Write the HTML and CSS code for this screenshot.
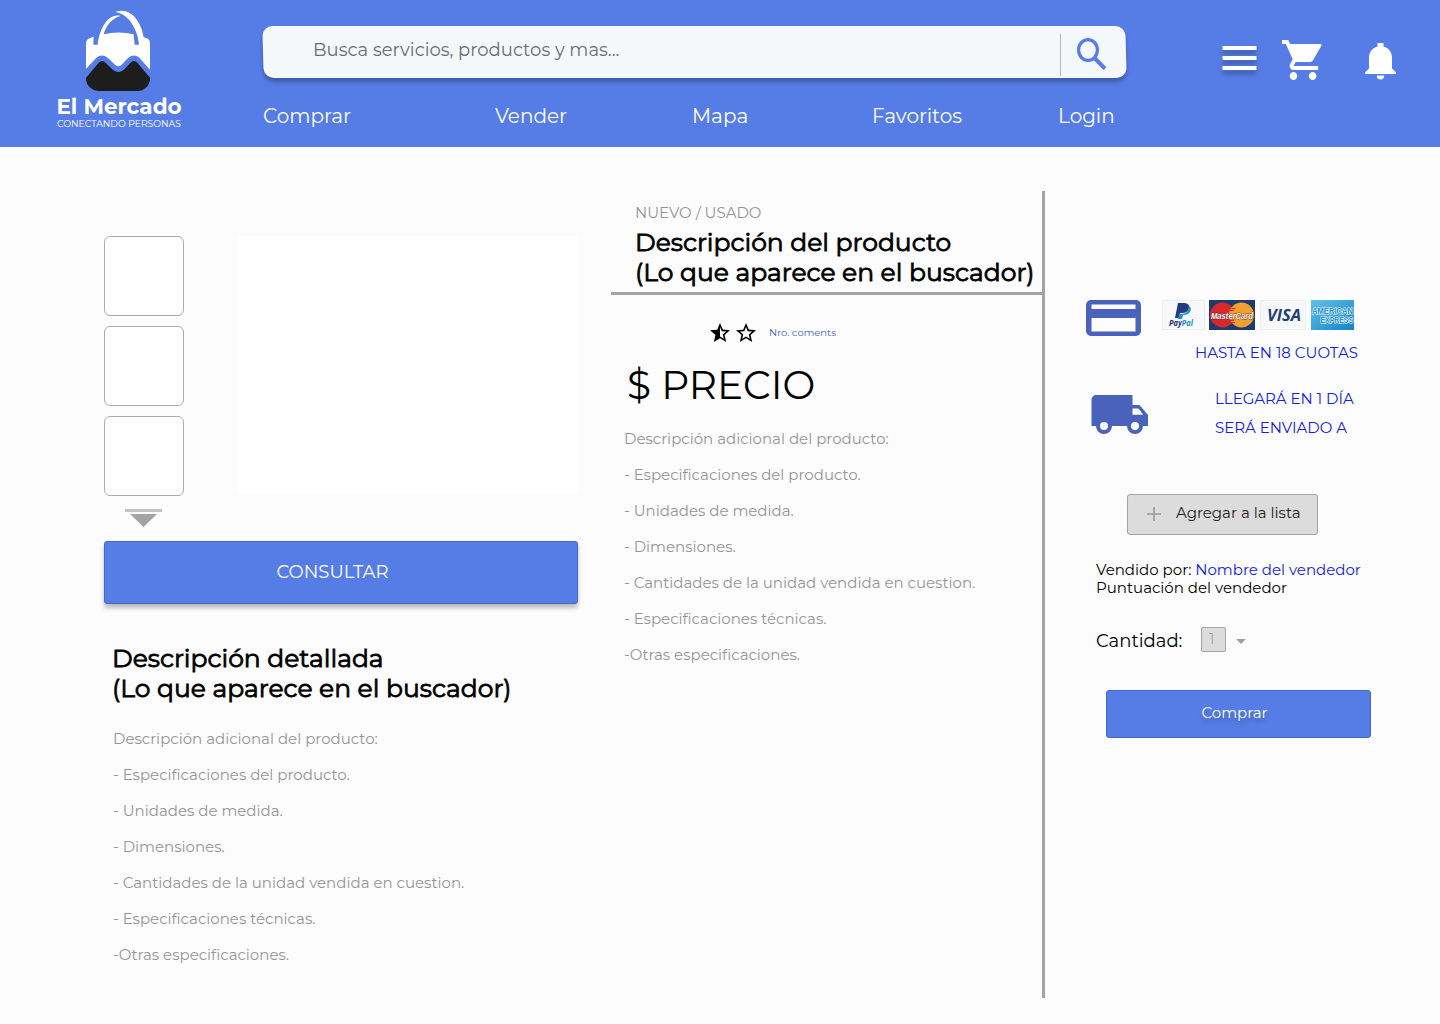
FILE: index.html
```html
<!DOCTYPE html>
<html lang="es">
<head>
<meta charset="utf-8">
<title>El Mercado</title>
<link rel="stylesheet" href="styles.css">
</head>
<body>
<header class="header">
  <a class="brand">
    <svg class="brand-mark" viewBox="135 30 198 246">
      <path fill="#fff" d="M138 207V128Q139 115 161 110L160 134H173C178 90 202 38 242 48C214 55 198 78 191 103Q235 92 281 103L284 134H297C294 92 268 42 226 36C268 20 303 60 311 112Q329 115 330 128V209L298 173Q282 160 265 173L245 194Q235 203 225 194L203 173Q186 160 169 173Z"/>
      <path fill="#1d1d1d" d="M138 233L176 188Q185 179 195 187L219 210Q235 222 251 210L273 187Q283 179 292 188L330 233V240Q326 268 296 273H174Q142 268 138 240Z"/>
    </svg>
    <span class="brand-name">El Mercado</span>
    <span class="brand-tag">CONECTANDO PERSONAS</span>
  </a>
  <div class="center">
    <div class="search">
      <span class="search-text">Busca servicios, productos y mas...</span>
      <span class="search-btn">
        <svg width="30" height="33" viewBox="0 0 30 33" fill="none" stroke="#557de5"><ellipse cx="11" cy="12" rx="9.4" ry="10.4" stroke-width="3.2"/><path stroke-width="4" d="M18 20.5l10 10.2"/></svg>
      </span>
    </div>
    <nav class="nav">
      <a class="n1">Comprar</a><a class="n2">Vender</a><a class="n3">Mapa</a><a class="n4">Favoritos</a><a class="n5">Login</a>
    </nav>
  </div>
  <div class="actions">
    <svg class="menu" width="35" height="25" viewBox="0 0 35 25" fill="#fff"><path d="M.5 0h34v4h-34zM.5 10h34v4h-34zM.5 20h34v4h-34z"/></svg>
    <svg class="cart" width="40" height="40" viewBox="1 2 20.900 20" preserveAspectRatio="none" fill="#fff"><path d="M7 18c-1.100 0-1.990.9-1.990 2S5.900 22 7 22s2-.9 2-2-.9-2-2-2zM1 2v2h2l3.600 7.590-1.350 2.450c-.16.28-.25.61-.25.96 0 1.100.9 2 2 2h12.900v-2H7.420c-.14 0-.25-.11-.25-.25l.03-.12.900-1.630h7.450c.75 0 1.410-.41 1.750-1.030l4.480-7.470A1 1 0 0 0 20.900 4H5.210l-.94-2H1zm16 16c-1.100 0-1.990.9-1.990 2s.89 2 1.990 2 2-.9 2-2-.9-2-2-2z"/></svg>
    <svg class="bell" width="31" height="37" viewBox="0 0 31 37" fill="#fff"><path d="M12.500 0h6v3.500C24.500 5 27 10 27 15v10.500l4 4V31H0v-1.500l4-4V15C4 10 6.500 5 12.500 3.500zM11.800 32.500h7.400a3.700 4 0 0 1-7.400 0z"/></svg>
  </div>
</header>
<main class="main">
  <section class="left">
    <div class="gallery">
      <div class="thumbs">
        <div class="thumb"></div><div class="thumb"></div><div class="thumb"></div>
        <svg class="more" width="37" height="18" viewBox="0 0 37 18"><path fill="#c4c4c4" d="M0 0h37v3H0z"/><path fill="#a4a4a4" d="M5 5h27L18.500 18z"/></svg>
      </div>
      <div class="photo"></div>
    </div>
    <div class="consult">CONSULTAR</div>
    <h2 class="title detail-title">Descripción detallada<br>(Lo que aparece en el buscador)</h2>
    <ul class="specs">
      <li>Descripción adicional del producto:</li>
      <li>- Especificaciones del producto.</li>
      <li>- Unidades de medida.</li>
      <li>- Dimensiones.</li>
      <li>- Cantidades de la unidad vendida en cuestion.</li>
      <li>- Especificaciones técnicas.</li>
      <li>-Otras especificaciones.</li>
    </ul>
  </section>
  <section class="middle">
    <div class="heading">
      <div class="state">NUEVO / USADO</div>
      <h1 class="title">Descripción del producto<br>(Lo que aparece en el buscador)</h1>
    </div>
    <div class="rating">
      <svg width="20" height="19" viewBox="2 2 20 19"><path d="M22 9.240l-7.190-.62L12 2 9.190 8.630 2 9.240l5.460 4.730L5.820 21 12 17.270 18.180 21l-1.630-7.030L22 9.240zM12 15.400V6.100l1.710 4.040 4.380.38-3.320 2.880 1 4.280L12 15.400z"/></svg>
      <svg width="20" height="19" viewBox="2 2 20 19"><path d="M22 9.240l-7.190-.62L12 2 9.190 8.630 2 9.240l5.460 4.730L5.820 21 12 17.270 18.180 21l-1.630-7.030L22 9.240zM12 15.400l-3.760 2.270 1-4.280-3.320-2.880 4.380-.38L12 6.100l1.710 4.040 4.380.38-3.320 2.880 1 4.280L12 15.400z"/></svg>
      <a class="comments">Nro. coments</a>
    </div>
    <div class="price">$ PRECIO</div>
    <ul class="specs">
      <li>Descripción adicional del producto:</li>
      <li>- Especificaciones del producto.</li>
      <li>- Unidades de medida.</li>
      <li>- Dimensiones.</li>
      <li>- Cantidades de la unidad vendida en cuestion.</li>
      <li>- Especificaciones técnicas.</li>
      <li>-Otras especificaciones.</li>
    </ul>
  </section>
  <aside class="right">
    <div class="pay">
      <svg class="card" width="55" height="36" viewBox="0 0 55 36"><path fill="#4963bd" fill-rule="evenodd" d="M5 0h45a5 5 0 0 1 5 5v26a5 5 0 0 1-5 5H5a5 5 0 0 1-5-5V5a5 5 0 0 1 5-5zM5.500 4.500V9h44V4.500zM5.500 18v13.500h44V18z"/></svg>
      <svg class="brands" width="192" height="30" viewBox="0 0 192 30">
        <defs><linearGradient id="amex" x2="1" y2="1"><stop offset="0" stop-color="#62c1e8"/><stop offset="1" stop-color="#1685c3"/></linearGradient></defs>
        <path fill="#f7f8fa" stroke="#eceef0" d="M.5.500h42v29H.5zM98.500.500h45v29h-45z"/>
        <path fill="#253b80" d="M16 3h7q5 1 4 5-1 5-7 5h-2l-1 5h-4z"/>
        <path fill="#1e91cf" d="M27 6q3 2 1 6-2 3-7 3l-1 4h-4l1-5h3q7-1 7-8z"/>
        <text class="pp" x="7" y="25.500" textLength="24" lengthAdjust="spacingAndGlyphs" fill="#1b3770">Pay<tspan fill="#2592cb">Pal</tspan></text>
        <path fill="#1d3b6d" d="M47 0h46v30H47z"/>
        <circle cx="60.500" cy="15" r="12.500" fill="#d42a2b"/><circle cx="79.500" cy="15" r="12.500" fill="#f0a02e"/>
        <path fill="#d42a2b" d="M69.500 8h4v1h-4zM68 10h4v1h-4zM68 20h4v1h-4zM69 22h4v1h-4z"/>
        <text class="mc" x="49" y="18.500" textLength="42" lengthAdjust="spacingAndGlyphs">MasterCard</text>
        <text class="visa" x="105" y="20.500" textLength="34" lengthAdjust="spacingAndGlyphs" fill="#1d4077">VISA</text>
        <path fill="url(#amex)" d="M149 0h43v30h-43z"/>
        <g class="amex"><text x="150" y="13.500" textLength="41" lengthAdjust="spacingAndGlyphs">AMERICAN</text><text x="158.500" y="22.800" textLength="32.500" lengthAdjust="spacingAndGlyphs">EXPRESS</text></g>
      </svg>
    </div>
    <div class="blue quotas">HASTA EN 18 CUOTAS</div>
    <div class="ship">
      <svg width="57" height="39" viewBox="0 0 57 39"><path fill="#4963bd" fill-rule="evenodd" d="M5 0h36.500v10h7L57 20v11h-5a8 8 0 0 1-16 0H21a8 8 0 0 1-16 0H.5V5a4.500 5 0 0 1 4.500-5zM41.500 13.500v6.300h10.800l-4.800-6.300zM13 27a4 4 0 1 0 0 8 4 4 0 1 0 0-8zM44 27a4 4 0 1 0 0 8 4 4 0 1 0 0-8z"/></svg>
      <div class="blue"><div class="arrive">LLEGARÁ EN 1 DÍA</div><div class="sent">SERÁ ENVIADO A</div></div>
    </div>
    <div class="add"><svg width="14" height="14" viewBox="0 0 14 14"><path stroke="#9b9b9b" stroke-width="1.600" d="M7 0v14M0 7h14"/></svg><span>Agregar a la lista</span></div>
    <div class="seller"><div class="sold">Vendido por: <a>Nombre del vendedor</a></div><div class="score">Puntuación del vendedor</div></div>
    <div class="qty"><span class="qty-label">Cantidad:</span><span class="qty-box">1</span><svg width="10" height="5" viewBox="0 0 10 5"><path fill="#a0a0a0" d="M0 0h10L5 5z"/></svg></div>
    <div class="buy">Comprar</div>
  </aside>
</main>
</body>
</html>
```
FILE: styles.css
```css
* { box-sizing: border-box; }
body { margin: 0; width: 1440px; height: 1024px; overflow: hidden; background: #fcfcfc; color: #000; font-family: Montserrat, Inter, sans-serif; font-variant-ligatures: none; }
h1, h2, ul { margin: 0; padding: 0; }
ul { list-style: none; }
svg { display: block; flex: none; }

.header { display: flex; height: 147px; background: #557de5; color: #fff; }
.brand { display: flex; flex-direction: column; align-items: center; width: 238px; padding-top: 10px; }
.brand-mark { width: 66px; height: 82px; margin-right: 2px; }
.brand-name { margin-top: 2px; font-size: 21.500px; line-height: 25px; font-weight: 700; white-space: nowrap; }
.brand-tag { font-size: 9.250px; line-height: 10px; font-weight: 400; white-space: nowrap; }

.center { width: 864px; margin-left: 25px; padding-top: 26px; }
.search { position: relative; z-index: 0; display: flex; height: 52px; }
.search::before { content: ""; position: absolute; z-index: -1; inset: 0 1px 0 0; background: #f4f8fb; border-radius: 10px; transform: skewX(1.500deg); box-shadow: 0 4px 4px rgba(0, 0, 0, .27); }
.search-text { width: 797px; padding-left: 50px; font-size: 18px; line-height: 48px; color: #6d6d6d; }
.search-btn { height: 42px; margin-top: 8px; padding: 4px 0 0 16px; border-left: 1px solid #b5b8ba; }
.nav { display: flex; margin-top: 26px; font-size: 20px; line-height: 24px; }
.nav a { white-space: nowrap; }
.n1 { width: 232px; } .n2 { width: 197px; } .n3 { width: 180px; } .n4 { width: 186px; }

.actions { display: flex; margin-left: 95px; }
.menu { margin-top: 46px; overflow: visible; filter: drop-shadow(0 4px 2px rgba(0, 0, 0, .28)); }
.cart { margin: 40px 0 0 25px; }
.bell { margin: 43px 0 0 43px; }

.main { display: flex; padding: 44px 0 0 104px; }
.left { width: 474px; padding-top: 45px; }
.gallery { display: flex; justify-content: space-between; height: 305px; }
.thumbs { display: flex; flex-direction: column; gap: 10px; width: 80px; }
.thumb { height: 80px; border: 1px solid #ababab; border-radius: 6px; background: #fff; }
.more { margin: 3px 0 0 21px; }
.photo { width: 340px; height: 258px; background: #fff; }
.consult { height: 63px; padding-right: 17px; background: #557de5; border: 1px solid #4566c8; border-radius: 3px; box-shadow: 0 4px 4px rgba(0, 0, 0, .25); color: #fff; font-size: 18px; line-height: 60px; text-align: center; }
.title { font-size: 25px; line-height: 30px; font-weight: 400; -webkit-text-stroke: .8px #000; white-space: nowrap; }
.detail-title { margin: 39px 0 0 8px; }
.specs { font-size: 15px; line-height: 36px; color: #959595; }
.left .specs { margin: 18px 0 0 9px; }

.middle { width: 434px; height: 807px; margin-left: 33px; border-right: 3px solid #a4a4a4; }
.heading { height: 104px; padding: 13px 0 0 24px; border-bottom: 3px solid #a4a4a4; }
.state { height: 23px; font-size: 15px; line-height: 18px; color: #959595; }
.rating { display: flex; gap: 6px; margin: 28px 0 0 99px; }
.comments { margin-left: 7px; color: #4963bd; font-size: 10px; line-height: 20px; }
.price { margin: 18px 0 0 16px; font-size: 39px; line-height: 48px; }
.middle .specs { margin: 12px 0 0 13px; }

.right { width: 300px; margin-left: 41px; padding-top: 109px; }
.pay { display: flex; height: 44px; gap: 21px; }
.pp { font: italic 700 8px "Open Sans", sans-serif; }
.mc { font: italic 700 9px "Liberation Sans", sans-serif; fill: #fff; stroke: #6b2020; stroke-width: .8px; paint-order: stroke; }
.visa { font: italic 700 16.500px "Open Sans", sans-serif; }
.amex { font: 700 8.500px "Liberation Sans", sans-serif; fill: #2c91c7; stroke: #e2f3fb; stroke-width: 1.200px; paint-order: stroke; }
.blue { color: #1420dc; font-size: 15px; line-height: 18px; white-space: nowrap; }
.quotas { padding-left: 109px; }
.ship { display: flex; height: 47px; margin: 28px 0 0 5px; gap: 67px; }
.ship svg { margin-top: 5px; }
.sent { margin-top: 11px; }
.add { display: flex; width: 191px; height: 41px; margin: 57px 0 0 41px; padding: 0 0 0 19px; gap: 15px; background: #dcdcdc; border: 1px solid #a4a4a4; border-radius: 3px; color: #222; font-size: 15px; line-height: 36px; white-space: nowrap; }
.add svg { margin-top: 12px; }
.seller { margin: 26px 0 0 10px; font-size: 15px; line-height: 18px; white-space: nowrap; }
.seller a { color: #1420dc; }
.qty { display: flex; margin: 30px 0 0 10px; }
.qty-label { width: 105px; font-size: 18px; line-height: 28px; }
.qty-box { width: 25px; height: 25px; padding-left: 7px; background: #dcdcdc; border: 1px solid #a4a4a4; border-radius: 2px; color: #a4a4a4; font-size: 15px; line-height: 22px; }
.qty svg { margin: 12px 0 0 10px; }
.buy { width: 265px; height: 48px; margin: 35px 0 0 20px; padding-right: 8px; background: #557de5; border: 1px solid #4566c8; border-radius: 3px; color: #fff; font-size: 15px; line-height: 43px; text-align: center; text-shadow: 0 4px 4px rgba(0, 0, 0, .25); }
```
